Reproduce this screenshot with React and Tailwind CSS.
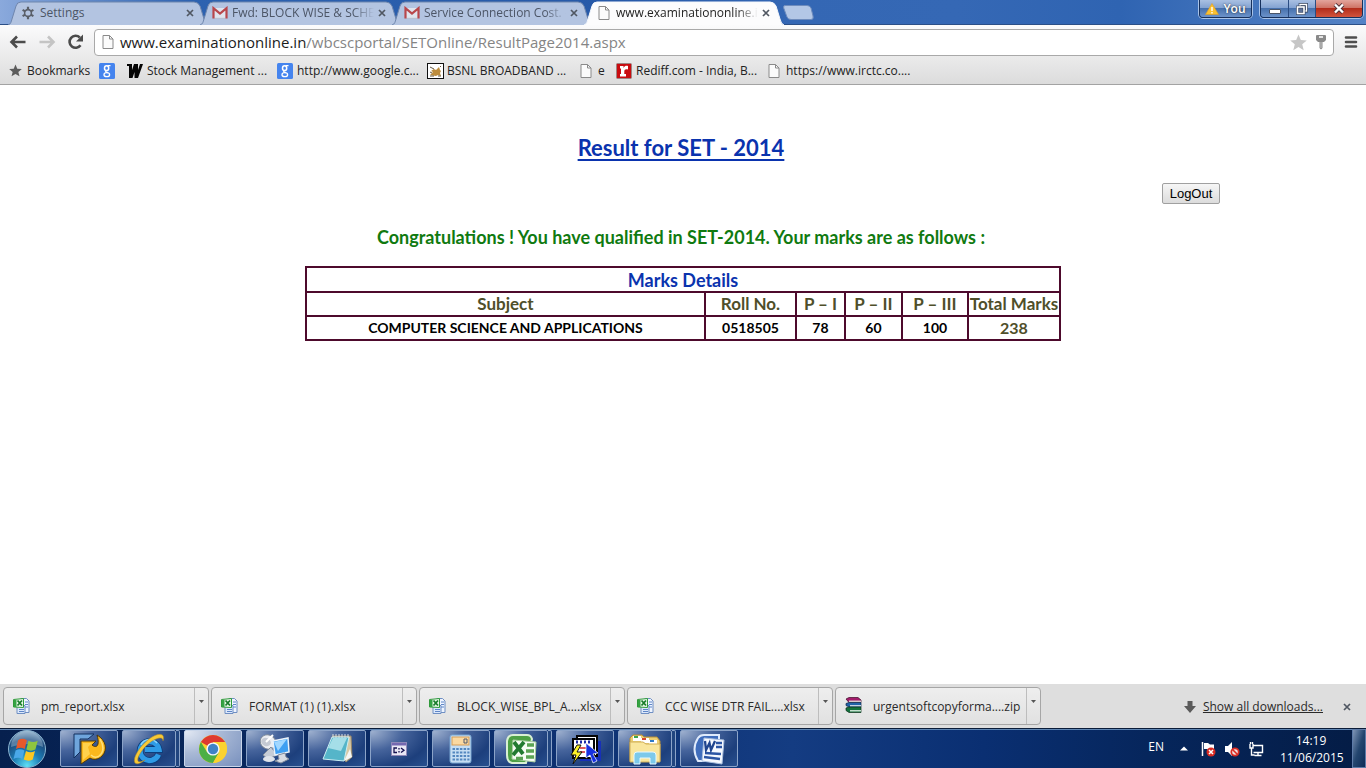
import React from "react";

const ui = "font-['Open_Sans','Noto_Sans',sans-serif]";
const calibri = "font-['Lato','Open_Sans',sans-serif]";

/* ---------- small icons ---------- */

function GearIcon() {
  return (
    <svg width="14" height="14" viewBox="0 0 14 14" className="shrink-0">
      <g stroke="#5a5f68" strokeWidth="2.2">
        <path d="M7 .8v12.4M1.6 3.9l10.8 6.2M1.6 10.1l10.8-6.2" />
      </g>
      <circle cx="7" cy="7" r="4.2" fill="#5a5f68" />
      <circle cx="7" cy="7" r="2.6" fill="#b4c4e0" />
    </svg>
  );
}

function GmailIcon() {
  return (
    <svg width="16" height="14" viewBox="0 0 16 14" className="shrink-0">
      <path d="M2 2h12v10H2z" fill="#dfe4ee" />
      <path d="M1.500 12.500V2.200l6.500 5.400 6.500-5.400v10.300" fill="none" stroke="#b8474c" strokeWidth="2.2" />
      <path d="M3 12.3h10" stroke="#b9c0ce" />
    </svg>
  );
}

function PageIcon() {
  return (
    <svg width="12" height="16" viewBox="0 0 12 16" className="shrink-0">
      <path d="M1 1.5h6.5L11 5v9.5H1z" fill="#fbfbfb" stroke="#8a8a8a" />
      <path d="M7.5 1.5V5H11" fill="none" stroke="#8a8a8a" />
    </svg>
  );
}

function CloseX() {
  return (
    <svg width="8" height="8" viewBox="0 0 8 8">
      <path d="M1 1l6 6M7 1L1 7" stroke="#505762" strokeWidth="1.7" />
    </svg>
  );
}

function Star({ size, color }) {
  return (
    <svg width={size} height={size} viewBox="0 0 16 16" className="shrink-0">
      <path d="M8 .5l2.2 5.2 5.6.4-4.3 3.6 1.4 5.5L8 12.2l-4.9 3 1.4-5.5L.2 6.1l5.600-.4z" fill={color} />
    </svg>
  );
}

function GoogleG() {
  return (
    <svg width="16" height="16" viewBox="0 0 16 16" className="shrink-0">
      <rect width="16" height="16" rx="1.5" fill="#4584ee" />
      <g fill="none" stroke="#fff">
        <ellipse cx="7.6" cy="5.2" rx="2.1" ry="2.4" strokeWidth="1.5" />
        <path d="M8.5 2.6h3M7.3 7.6c-1.6 1 .2 1.6 1.5 2.2" strokeWidth="1.2" />
        <ellipse cx="7.8" cy="11.7" rx="2.8" ry="2" strokeWidth="1.3" />
      </g>
    </svg>
  );
}

function StockIcon() {
  return (
    <svg width="16" height="16" viewBox="0 0 16 16" className="shrink-0">
      <path d="M0 1h5v6l2-6h4v6l2-6h3L11 15H7.5V9L5.5 15H2V3H0z" fill="#050505" />
    </svg>
  );
}

function BsnlIcon() {
  return (
    <svg width="17" height="16" viewBox="0 0 17 16" className="shrink-0">
      <rect x=".5" y=".5" width="16" height="15" fill="#fff" stroke="#111" />
      <path d="M3 12l3-3-2-1 3-2 2 1 3-3 1 3 1 1-1 2 1 3-3-1-2 1z" fill="#bd8c3c" />
      <path d="M3 4l4 2M3 13h4M11 13h3M3 9l2 1M13 4l1-1" stroke="#655842" />
    </svg>
  );
}

function RediffIcon() {
  return (
    <svg width="16" height="16" viewBox="0 0 16 16" className="shrink-0">
      <rect x=".5" y=".5" width="15" height="15" rx="1" fill="#c90c10" stroke="#9d8583" />
      <path d="M4 3h3.5v2c1-2 2.500-2.400 4.500-2v3.500c-2.500-.6-3.700 0-3.700 2V11H10v2.500H4V11h1V5.500H4z" fill="#fff" />
    </svg>
  );
}

function ExcelFileIcon() {
  return (
    <svg width="17" height="17" viewBox="0 0 17 17" className="shrink-0">
      <path d="M8 1.500h5.500l2.500 2.500v11.500H8z" fill="#eef4ff" stroke="#6f8fc3" />
      <path d="M4 8.500h8v8H4z" fill="#dce8fb" stroke="#6f8fc3" />
      <path d="M12 5h3M12 7.500h3M12 10h3M6 12.500h5M6 14.500h5" stroke="#5e86c7" />
      <path d="M.5 2.500l10-1v9l-10-.5z" fill="#e9f8e8" stroke="#2f9a3b" />
      <path d="M1 3h2.500v7H1z" fill="#35a343" />
      <path d="M4.500 3.500l4.500 5M9 3.500L4.500 8.500" stroke="#187c2a" strokeWidth="1.8" />
    </svg>
  );
}

function ZipIcon() {
  return (
    <svg width="17" height="17" viewBox="0 0 17 17" className="shrink-0">
      <path d="M1 2l3-1.500h9L16 3v2.500H4z" fill="#a31b6b" stroke="#3c0a26" strokeWidth=".7" />
      <path d="M4 3.500h12v2.200H4z" fill="#d7c9d0" />
      <path d="M1 6.500l3-1h12v4.500H4L1 8.500z" fill="#2363a9" stroke="#0c2444" strokeWidth=".7" />
      <path d="M5 8h11v1.500H5z" fill="#c5d4e4" />
      <path d="M1 11l3-1h12v5.500H4L1 13.500z" fill="#14713d" stroke="#082e18" strokeWidth=".7" />
      <path d="M5 13h11v1.500H5z" fill="#c4dfce" />
    </svg>
  );
}

/* ---------- title bar ---------- */

const tabs = [
  { title: "Settings", icon: <GearIcon /> },
  { title: "Fwd: BLOCK WISE & SCHE", icon: <GmailIcon />, fade: true },
  { title: "Service Connection Cost. -", icon: <GmailIcon />, fade: true },
  { title: "www.examinationonline.in", icon: <PageIcon />, active: true, fade: true },
];

function Tab({ title, icon, active, fade }) {
  return (
    <div className={`relative -mr-2 flex h-6 w-[200px] items-center pl-3 ${active ? "z-10" : ""}`}>
      <svg className="absolute inset-0 h-full w-full" viewBox="0 0 200 24" preserveAspectRatio="none">
        <path
          d="M0 24C3 23 3 21 4 18L8 5Q9 1 13 1H186Q190 1 192 5L196 18Q197 23 200 24"
          fill={active ? "#fcfcfd" : "#b3c4e1"}
          stroke={active ? "#f4f7fc" : "#6f86ad"}
        />
      </svg>
      <div className="relative flex w-4 shrink-0 justify-center">{icon}</div>
      <div
        className={`relative ml-1 w-[142px] text-xs whitespace-nowrap ${active ? "text-[#222]" : "text-[#4c5566]"} ${
          fade ? "[mask-image:linear-gradient(to_right,black_85%,transparent)]" : ""
        }`}
      >
        {title}
      </div>
      <button aria-label={`Close ${title}`} className="relative flex h-4 w-4 items-center justify-center">
        <CloseX />
      </button>
    </div>
  );
}

function WindowControls() {
  const frame = "flex h-[18px] overflow-hidden rounded-b border border-t-0 border-[#16305c] shadow-[0_0_0_1px_#a9c3e8]";
  const pane = "flex items-center justify-center bg-[linear-gradient(#a9c0e2_0%,#84a3d2_45%,#4771ad_50%,#6c93ca_100%)]";
  return (
    <div className="mr-[3px] flex shrink-0 items-start gap-2">
      <div className={frame}>
        <button className={`${pane} w-[51px] gap-1 text-xs font-semibold text-white [text-shadow:0_0_2px_#222]`}>
          <svg width="14" height="12" viewBox="0 0 14 12">
            <path d="M7 .5L13.500 11.500H.5z" fill="#fbc02f" stroke="#e0a021" strokeWidth=".6" />
            <path d="M7 4v4M7 9v1.500" stroke="#fff" strokeWidth="1.4" />
          </svg>
          You
        </button>
      </div>
      <div className={frame}>
        <button aria-label="Minimize" className={`${pane} w-7 border-r border-[#2b4d83]`}>
          <svg width="12" height="12" viewBox="0 0 12 12">
            <rect x=".5" y="6.500" width="11" height="4" rx=".5" fill="#fff" stroke="#4a5569" />
          </svg>
        </button>
        <button aria-label="Restore" className={`${pane} w-[27px] border-r border-[#2b4d83]`}>
          <svg width="12" height="12" viewBox="0 0 12 12">
            <path d="M4 1.500h6.500v6.500H4z" fill="none" stroke="#35435c" strokeWidth="2.8" />
            <path d="M4 1.500h6.500v6.500H4z" fill="none" stroke="#fff" strokeWidth="1.4" />
            <rect x="1.500" y="4" width="6.500" height="6.500" fill="#5e7399" stroke="#35435c" strokeWidth="2.8" />
            <rect x="1.500" y="4" width="6.500" height="6.500" fill="none" stroke="#fff" strokeWidth="1.6" />
          </svg>
        </button>
        <button
          aria-label="Close"
          className="flex w-[46px] items-center justify-center bg-[linear-gradient(#e3a59c_0%,#cf7466_45%,#b32d1b_50%,#d1543d_100%)]"
        >
          <svg width="12" height="11" viewBox="0 0 12 11">
            <path d="M2 1.500l8 8M10 1.500l-8 8" stroke="#4c3038" strokeWidth="4" />
            <path d="M2 1.500l8 8M10 1.500l-8 8" stroke="#fff" strokeWidth="2.4" />
          </svg>
        </button>
      </div>
    </div>
  );
}

function TitleBar() {
  return (
    <div className="flex h-[25px] justify-between bg-[linear-gradient(90deg,#8aa9dc_0%,#2d62b0_14%,#2659a8_45%,#3467b4_58%,#3568b5_70%,#2f64b2_82%,#5583c6_100%)] shadow-[inset_0_-1px_0_#2b4f87]">
      <div className="flex items-end pl-2">
        {tabs.map((t) => (
          <Tab key={t.title} {...t} />
        ))}
        <button aria-label="New tab" className="ml-[7px] self-center">
          <svg width="31" height="15" viewBox="0 0 31 15">
            <path d="M1 .5H24Q27 .5 28 3L30 11Q31 14.500 28 14.500H8Q5 14.500 4 12L.7 3Q0 .5 2 .5z" fill="#b3c7e6" stroke="#6e8cbd" />
          </svg>
        </button>
      </div>
      <WindowControls />
    </div>
  );
}

/* ---------- toolbar and bookmarks ---------- */

function Toolbar() {
  return (
    <div className="flex h-[34px] items-center pr-2 pl-[9px]">
      <button aria-label="Back" className="flex w-[29px] justify-start">
        <svg width="18" height="14" viewBox="0 0 18 14">
          <path d="M8 1.500L2.500 7 8 12.500M3 7h13.500" fill="none" stroke="#4b4b4b" strokeWidth="2.600" />
        </svg>
      </button>
      <button aria-label="Forward" className="flex w-[29px] justify-start">
        <svg width="18" height="14" viewBox="0 0 18 14">
          <path d="M10 1.500L15.500 7 10 12.500M15 7H1.500" fill="none" stroke="#c4c4c4" strokeWidth="2.600" />
        </svg>
      </button>
      <button aria-label="Reload" className="flex w-[27px] justify-start">
        <svg width="18" height="16" viewBox="0 0 18 16">
          <path d="M13.500 11.200A6 6 0 1 1 12.800 3.500" fill="none" stroke="#4b4b4b" strokeWidth="2.600" />
          <path d="M16 .5v7H9z" fill="#4b4b4b" />
        </svg>
      </button>
      <div className="flex h-[27px] grow items-center rounded-sm border border-[#a9a9a9] bg-white pl-[7px]">
        <PageIcon />
        <a href="#address" className="ml-1.5 grow text-[15px] leading-6 text-[#858585]">
          <span className="text-[#1c1c1c]">www.examinationonline.in</span>/wbcscportal/SETOnline/ResultPage2014.aspx
        </a>
        <button aria-label="Bookmark this page">
          <Star size={17} color="#c6c6c6" />
        </button>
        <button aria-label="Saved passwords" className="mr-1.5 ml-2">
          <svg width="12" height="16" viewBox="0 0 12 16">
            <path d="M1.500 1h9l.5 1v4l-2 2H7.500v6L6 15.500 4.500 14V8H3L1 6V2z" fill="#8a8a8a" />
            <path d="M4 3h4" stroke="#fff" strokeWidth="1.500" />
            <path d="M6 8v6" stroke="#c8c8c8" />
          </svg>
        </button>
      </div>
      <button aria-label="Menu" className="ml-2.5">
        <svg width="14" height="14" viewBox="0 0 14 14">
          <path d="M2 2.500h10M2 7h10M2 11.500h10" stroke="#4e4e4e" strokeWidth="2.600" strokeLinecap="round" />
        </svg>
      </button>
    </div>
  );
}

const bookmarks = [
  { label: "Bookmarks", icon: <Star size={13} color="#5c5c5c" />, w: "w-[92px]" },
  { label: "", icon: <GoogleG />, w: "w-7" },
  { label: "Stock Management ...", icon: <StockIcon />, w: "w-[150px]" },
  { label: "http://www.google.c...", icon: <GoogleG />, w: "w-[150px]" },
  { label: "BSNL BROADBAND ...", icon: <BsnlIcon />, w: "w-[151px]" },
  { label: "e", icon: <PageIcon />, w: "w-[38px]" },
  { label: "Rediff.com - India, B...", icon: <RediffIcon />, w: "w-[150px]" },
  { label: "https://www.irctc.co....", icon: <PageIcon />, w: "w-[150px]" },
];

function BookmarksBar() {
  return (
    <div className="flex h-[25px] items-center pb-0.5 pl-[7px]">
      {bookmarks.map((b, i) => (
        <a
          key={i}
          href="#bookmark"
          aria-label={b.label || "Google"}
          className={`flex shrink-0 items-center gap-1 text-xs whitespace-nowrap text-[#222] ${b.w}`}
        >
          <span className="flex w-4 shrink-0 justify-center">{b.icon}</span>
          {b.label}
        </a>
      ))}
    </div>
  );
}

/* ---------- page ---------- */

function ResultPage() {
  const cell = "border-2 border-[#4d0a2c] p-0 text-center";
  const head = `${cell} h-6 text-[17px] leading-5 font-bold text-[#4f4f2a]`;
  const data = `${cell} h-6 text-sm leading-5 font-bold text-black`;
  return (
    <main className={`min-h-0 grow overflow-hidden bg-white ${calibri}`}>
      <h1 className="mt-12 pr-1 text-center text-[22px] leading-[30px] font-bold text-[#0a33ae] underline decoration-2 underline-offset-3">
        Result for SET - 2014
      </h1>
      <div className="mt-5 flex justify-end pr-[146px]">
        <button className="h-[21px] w-[58px] rounded-xs border border-[#a0a0a0] bg-linear-to-b from-[#f6f6f6] to-[#dcdcdc] font-['Liberation_Sans',Arial,sans-serif] text-[13px] leading-4 text-black">
          LogOut
        </button>
      </div>
      <p className="mt-[21px] pr-1 text-center text-lg leading-6 font-bold text-[#107a10]">
        Congratulations ! You have qualified in SET-2014. Your marks are as follows :
      </p>
      <table className="mx-auto mt-[17px] w-[756px] table-fixed border-collapse">
        <colgroup>
          <col className="w-[399px]" />
          <col className="w-[91px]" />
          <col className="w-[49px]" />
          <col className="w-[57px]" />
          <col className="w-[66px]" />
          <col className="w-[92px]" />
        </colgroup>
        <thead>
          <tr>
            <th colSpan={6} className={`${cell} h-[25px] text-lg leading-5 font-bold text-[#0a33ae]`}>
              Marks Details
            </th>
          </tr>
          <tr>
            {["Subject", "Roll No.", "P – I", "P – II", "P – III", "Total Marks"].map((h) => (
              <th key={h} className={`${head} whitespace-nowrap`}>
                {h}
              </th>
            ))}
          </tr>
        </thead>
        <tbody>
          <tr>
            {["COMPUTER SCIENCE AND APPLICATIONS", "0518505", "78", "60", "100"].map((d) => (
              <td key={d} className={data}>
                {d}
              </td>
            ))}
            <td className={`${cell} h-6 text-base leading-5 font-bold text-[#4f4f2a]`}>238</td>
          </tr>
        </tbody>
      </table>
    </main>
  );
}

/* ---------- downloads ---------- */

const downloads = [
  { name: "pm_report.xlsx" },
  { name: "FORMAT (1) (1).xlsx" },
  { name: "BLOCK_WISE_BPL_A....xlsx" },
  { name: "CCC WISE DTR FAIL....xlsx" },
  { name: "urgentsoftcopyforma....zip", zip: true },
];

function DownloadsBar() {
  return (
    <div className="flex h-[44px] shrink-0 items-center justify-between bg-[#dedede] pr-[15px] pl-[3px] text-xs text-[#2a2a2a]">
      <div className="flex gap-0.5">
        {downloads.map((d) => (
          <div
            key={d.name}
            className="flex h-[38px] w-[206px] rounded-sm border border-[#a6a6a6] bg-linear-to-b from-[#eeeeee] to-[#e1e1e1]"
          >
            <button className="flex grow items-center gap-[11px] pt-0.5 pl-[9px] whitespace-nowrap">
              <span className="pb-1">{d.zip ? <ZipIcon /> : <ExcelFileIcon />}</span>
              {d.name}
            </button>
            <button aria-label={`Options for ${d.name}`} className="flex w-3.5 justify-center border-l border-[#bdbdbd] pt-3">
              <svg width="5" height="4" viewBox="0 0 5 4">
                <path d="M0 0h5L2.500 3z" fill="#555" />
              </svg>
            </button>
          </div>
        ))}
      </div>
      <div className="flex items-center pt-0.5">
        <svg width="12" height="12" viewBox="0 0 12 12">
          <path d="M3.500 0h5v5H12L6 12 0 5h3.500z" fill="#5b5b5b" />
        </svg>
        <a href="#downloads" className="ml-[7px] underline">
          Show all downloads...
        </a>
        <button aria-label="Close downloads bar" className="ml-5">
          <CloseX />
        </button>
      </div>
    </div>
  );
}

/* ---------- taskbar ---------- */

function StartOrb() {
  return (
    <svg width="40" height="40" viewBox="0 0 40 40">
      <defs>
        <radialGradient id="orb" cx=".5" cy=".95" r=".95">
          <stop offset="0" stopColor="#5fe0f5" />
          <stop offset=".4" stopColor="#1c7db5" />
          <stop offset=".75" stopColor="#1c4a7c" />
          <stop offset="1" stopColor="#8fb0cc" />
        </radialGradient>
      </defs>
      <circle cx="20" cy="20" r="18.500" fill="url(#orb)" stroke="#8ab4d0" strokeWidth="1" />
      <path d="M4 18a16 16 0 0 1 32 0c-10-5-22-3-32 0z" fill="#c5dcec" opacity=".35" />
      <g transform="translate(-4.500 -4.500) scale(1.250)">
        <path d="M12.500 12.500c2.500-1.500 4.500-1.500 7 0l-1.700 7c-2.300-1.300-4.600-1.200-7 0z" fill="#e8592b" />
        <path d="M20.800 13c2.500 1.300 4.700 1.300 7.400 0l-1.900 7c-2.500 1.200-4.700 1.200-7.200 0z" fill="#8ec63f" />
        <path d="M10.500 20.700c2.400-1.300 4.500-1.200 7 0l-1.700 6.800c-2.400-1.300-4.500-1.200-7 0z" fill="#4aa8e8" />
        <path d="M18.800 21.200c2.400 1.300 4.700 1.300 7.200 0l-1.800 6.800c-2.500 1.300-4.700 1.200-7.200 0z" fill="#fcc722" />
      </g>
    </svg>
  );
}

function SapIcon() {
  return (
    <svg width="34" height="34" viewBox="0 0 34 34">
      <path d="M2 2h20l-6 5H8v13l-6 6z" fill="#6fa5dc" stroke="#12305f" />
      <path d="M9 9h15l-4 4c5 4 8 0 5-10 9 5 11 15 5 21-4 4-9 4-12 2l-9 6z" fill="#fbb81c" stroke="#4c380c" />
      <path d="M28 7c4 7 4 13-1 17-3 2-6 1-8-1" fill="none" stroke="#ffe07a" strokeWidth="1.500" />
      <path d="M11 11h9l-4 4 2 7-7 6z" fill="#ffd24d" />
    </svg>
  );
}

function IeIcon() {
  return (
    <svg width="34" height="34" viewBox="0 0 34 34">
      <path d="M26.500 22.500A9.500 9.500 0 1 1 27 17.500H13" fill="none" stroke="#0b3e7c" strokeWidth="6.800" />
      <path d="M26.500 22.500A9.500 9.500 0 1 1 27 17.500H13" fill="none" stroke="#2f9be6" strokeWidth="5.200" />
      <path d="M9 13a9.500 9.500 0 0 1 16-2" fill="none" stroke="#8bd4fa" strokeWidth="1.500" />
      <path d="M31 9c3-9-6-8-14-2C8 14 0 26 3 31c2 2 6 0 10-3-6 3-8 2-7-2 2-6 8-13 14-17 7-4 11-4 11 0z" fill="#f8c936" stroke="#a6822c" strokeWidth=".5" />
    </svg>
  );
}

function ChromeIcon() {
  return (
    <svg width="30" height="30" viewBox="0 0 30 30">
      <circle cx="15" cy="15" r="14" fill="#fbd22f" />
      <path d="M15 15L2.900 8A14 14 0 0 1 27.100 8H15z" fill="#de3a30" />
      <path d="M2.900 8A14 14 0 0 0 15 29l6-10.500-6-3.500-6 3z" fill="#4caf45" />
      <path d="M15 8H27.100A14 14 0 0 1 15 29l6-10.500z" fill="#fbd22f" />
      <circle cx="15" cy="15" r="6.600" fill="#f4f7fb" />
      <circle cx="15" cy="15" r="5.200" fill="#3f82c7" />
    </svg>
  );
}

function RemoteIcon() {
  return (
    <svg width="34" height="34" viewBox="0 0 34 34">
      <ellipse cx="10" cy="10" rx="8" ry="7" transform="rotate(25 10 10)" fill="#eceef2" stroke="#7c8796" />
      <ellipse cx="8" cy="10" rx="5" ry="4" transform="rotate(25 8 10)" fill="#c5cad3" />
      <path d="M8 10l7-7" stroke="#fff" strokeWidth="2" />
      <path d="M13 15l6 8-9 4-5-4z" fill="#c7cdd7" stroke="#828b9b" />
      <path d="M15 9l15-3 1 14-14 3z" fill="#3e9ff2" stroke="#e9f2fb" strokeWidth="1.500" />
      <path d="M16 10l13-3-9 12z" fill="#a1d7ff" />
      <path d="M20 23l7-2 1 4 3 2-8 4-6-2 4-2z" fill="#d7dbe3" stroke="#828b9b" />
      <ellipse cx="11" cy="27" rx="6" ry="3" fill="#dfe3ea" />
    </svg>
  );
}

function NotepadIcon() {
  return (
    <svg width="34" height="34" viewBox="0 0 34 34">
      <path d="M12 4h19l1 21-6 5z" fill="#d7c9a5" stroke="#97866a" />
      <path d="M12 5h17L24 29 3 27z" fill="#55b5c9" stroke="#cbeef3" />
      <path d="M13 6h14l-6 13-13-3z" fill="#b9e9f0" opacity=".8" />
      <path d="M24 29l8-4-2-8z" fill="#f4f6f5" />
      <path d="M13 2v4M16 2v4M19 2v4M22 2v4M25 2v4M28 2v4" stroke="#d7dde2" />
    </svg>
  );
}

function CmdIcon() {
  return (
    <svg width="16" height="14" viewBox="0 0 16 14">
      <rect x=".5" y=".5" width="15" height="13" fill="#e9e7f4" stroke="#8f89b8" />
      <path d="M1 1h14v2.500H1z" fill="#7468b0" />
      <path d="M6 6H3v4.500h3M8 6v1.500M8 9v1.500M10 6l3 2.200-3 2.300" fill="none" stroke="#151250" strokeWidth="1.300" />
    </svg>
  );
}

function CalcIcon() {
  return (
    <svg width="24" height="30" viewBox="0 0 24 30">
      <rect x="1" y="1" width="21" height="28" rx="2" fill="#c6def3" stroke="#76a4d0" />
      <rect x="3" y="3" width="17" height="8" fill="#fbd9a1" stroke="#d69d56" />
      <path d="M15 5h3v4h-3z" fill="none" stroke="#505868" />
      <g stroke="#5387bf" strokeWidth="2.200" strokeDasharray="2.500 1.200">
        <path d="M3.500 15h17M3.500 18.500h17M3.500 22h17M3.500 25.500h17" />
      </g>
    </svg>
  );
}

function ExcelIcon() {
  return (
    <svg width="34" height="32" viewBox="0 0 34 32">
      <path d="M9 2Q4 2 3 8v14q0 7 5 8h14L28 6Q27 2 23 2z" fill="#4da045" stroke="#d9efd4" strokeWidth="2" />
      <path d="M9 7l23 2-1 20-23-3z" fill="#f6fcf4" stroke="#a8cea0" />
      <path d="M23 12h7M22 18h8M22 24h8M12 25.500h7" stroke="#5aa353" strokeWidth="3.500" />
      <path d="M10 9l9 12M20 9L9 22" stroke="#227a30" strokeWidth="3.800" />
    </svg>
  );
}

function ServerToolIcon() {
  return (
    <svg width="34" height="32" viewBox="0 0 34 32">
      <path d="M12 8h21v20H12z" fill="#1730b8" />
      <path d="M9 3h20v20H9z" fill="#fff" stroke="#050505" strokeWidth="2" />
      <path d="M5 6h21v19H5z" fill="#fff" stroke="#050505" strokeWidth="2" />
      <path d="M8 9h16" stroke="#1b2aa8" strokeWidth="3" strokeDasharray="2 2" />
      <path d="M12 15h8M12 19h5" stroke="#d0222b" strokeWidth="1.500" />
      <path d="M18 10l12 10-5 1 4 7-4 2-3-8-4 3z" fill="#1731e0" stroke="#fff" strokeWidth=".7" />
      <path d="M9 12L3 22h5L5 31l9-12H9l4-7z" fill="#fdf229" stroke="#111" />
    </svg>
  );
}

function FolderIcon() {
  return (
    <svg width="34" height="32" viewBox="0 0 34 32">
      <path d="M2 5l3-3h9l2 2h13l3 4v20H2z" fill="#edcf73" stroke="#b38d3a" />
      <path d="M5 3h8v5H5zM13 5h8v5h-8zM21 7h8v4h-8z" fill="#fff" />
      <path d="M6 3h4v2H6z" fill="#3ca64d" />
      <path d="M14 5h4v2h-4z" fill="#d6462e" />
      <path d="M22 7h4v2h-4z" fill="#2d79c8" />
      <path d="M2 9h13l3 2h14v18H2z" fill="#f9e69d" stroke="#cfae59" />
      <path d="M6 31V22q0-3 3-3h16q3 0 3 3v9h-6v-6H12v6z" fill="#7cc9ea" stroke="#e5f8ff" />
    </svg>
  );
}

function WordIcon() {
  return (
    <svg width="34" height="32" viewBox="0 0 34 32">
      <path d="M6 28Q-1 16 6 5Q8 2 12 2h15v26z" fill="#3f6dbc" stroke="#e0ebfc" strokeWidth="2" />
      <path d="M12 5l20 2-2 24-20-3z" fill="#f6f9ff" stroke="#a9bede" />
      <path d="M24 10h6M24 14h6M13 20l16 1M12 24l16 2" stroke="#2c55a4" strokeWidth="2.300" />
      <path d="M13 8l1 9 3.500-7 1.500 7 4-9" fill="none" stroke="#20458f" strokeWidth="2.300" />
    </svg>
  );
}

const tasks = [
  { label: "SAP Logon", icon: <SapIcon /> },
  { label: "Internet Explorer", icon: <IeIcon />, stacked: true },
  { label: "Google Chrome", icon: <ChromeIcon />, active: true },
  { label: "Remote connection", icon: <RemoteIcon /> },
  { label: "Notepad", icon: <NotepadIcon /> },
  { label: "Command prompt", icon: <CmdIcon /> },
  { label: "Calculator", icon: <CalcIcon /> },
  { label: "Excel", icon: <ExcelIcon />, stacked: true },
  { label: "Server tool", icon: <ServerToolIcon /> },
  { label: "Explorer", icon: <FolderIcon />, stacked: true },
  { label: "Word", icon: <WordIcon /> },
];

function TaskButton({ label, icon, active, stacked }) {
  const skin = active
    ? "bg-[radial-gradient(ellipse_at_top_left,#e4eaf4_0%,#a9b9d6_45%,#7890bd_100%)] border-[#c9d6ea]"
    : "bg-[radial-gradient(ellipse_at_top_left,#a0b2d0_0%,#46649c_40%,#1d3f7c_75%,#28508f_100%)] border-[#8ba3c8]";
  return (
    <div className="flex w-[58px]">
      <button aria-label={label} className={`flex grow items-center justify-center rounded-xs border ${skin}`}>
        {icon}
      </button>
      {stacked && <div className="w-1 rounded-r-xs border border-l-0 border-[#8ba3c8] bg-[#21457f]" />}
    </div>
  );
}

function Taskbar() {
  return (
    <footer className="flex h-10 shrink-0 justify-between border-t border-[#0a1c38] bg-[linear-gradient(90deg,#06204e_0%,#0d3070_40%,#143c82_58%,#0a2f72_72%,#06265c_84%,#041c45_100%)] shadow-[inset_0_1px_0_#5f86b4]">
      <div className="flex">
        <button aria-label="Start" className="ml-[7px] flex w-10 items-center">
          <StartOrb />
        </button>
        <div className="ml-[13px] flex gap-1 pt-px pb-px">
          {tasks.map((t) => (
            <TaskButton key={t.label} {...t} />
          ))}
        </div>
      </div>
      <div className="flex items-center text-xs text-white">
        <span className="mb-1">EN</span>
        <svg width="8" height="5" viewBox="0 0 8 5" className="ml-4">
          <path d="M4 .5L8 4.500H0z" fill="#fff" />
        </svg>
        <svg width="16" height="16" viewBox="0 0 16 16" className="ml-3">
          <path d="M2.500 1v14" stroke="#fff" strokeWidth="1.500" />
          <path d="M4 2h4l2 1.500h4v6H9L7 8H4z" fill="#fff" />
          <circle cx="11" cy="11" r="4.500" fill="#d92b22" />
          <path d="M9 9l4 4M13 9l-4 4" stroke="#fff" strokeWidth="1.500" />
        </svg>
        <svg width="16" height="16" viewBox="0 0 16 16" className="ml-2">
          <path d="M1 5h3l4-4v14l-4-4H1z" fill="#fff" />
          <circle cx="11" cy="11" r="3.700" fill="#f2dedd" stroke="#d92b22" strokeWidth="1.800" />
          <path d="M8.500 8.500l5 5" stroke="#d92b22" strokeWidth="1.600" />
        </svg>
        <svg width="16" height="16" viewBox="0 0 16 16" className="ml-2">
          <path d="M5 4.500h9.500v7H5.500M10 11.500V14M6.500 14.500h7M2 3v4h3V3M2.500 1v2M4.500 1v2M3.500 7v7h3" fill="none" stroke="#fff" strokeWidth="1.400" />
        </svg>
        <div className="ml-4 w-[62px] text-center leading-[17px]">
          <div>14:19</div>
          <div>11/06/2015</div>
        </div>
        <button
          aria-label="Show desktop"
          className="ml-2.5 h-full w-3.5 border border-[#5d7ba8] bg-linear-to-br from-[#7f95b6] via-[#24466f] to-[#0d2b57]"
        />
      </div>
    </footer>
  );
}

export default function App() {
  return (
    <div className={`flex h-screen flex-col overflow-hidden ${ui}`}>
      <header className="shrink-0">
        <TitleBar />
        <div className="border-b border-[#a3a3a3] bg-linear-to-b from-[#fbfbfc] to-[#dcdcdc]">
          <Toolbar />
          <BookmarksBar />
        </div>
      </header>
      <ResultPage />
      <DownloadsBar />
      <Taskbar />
    </div>
  );
}
